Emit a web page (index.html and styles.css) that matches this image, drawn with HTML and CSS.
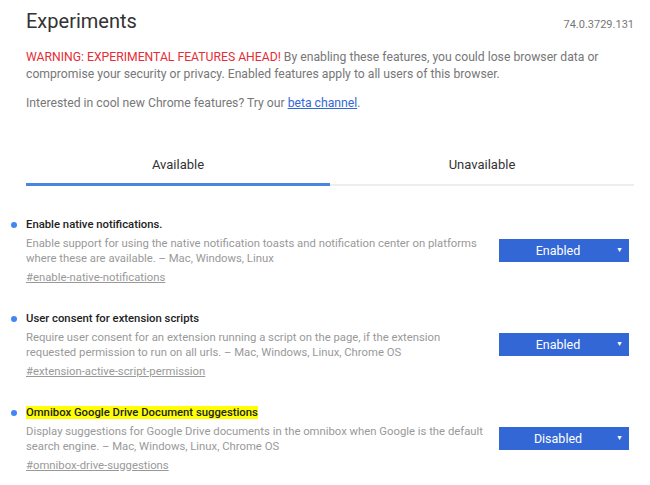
FILE: index.html
```html
<!DOCTYPE html>
<html lang="en">

<head>
    <meta charset="UTF-8">
    <title>Experiments</title>
    <link rel="stylesheet" href="styles.css">
</head>

<body>
    <div class="page">
        <div class="header">
            <h1 class="title">Experiments</h1>
            <span class="version">74.0.3729.131</span>
        </div>
        <p class="warning">
            <span class="warning-red">WARNING: EXPERIMENTAL FEATURES AHEAD!</span> By enabling these features, you could lose browser data or
            compromise your security or privacy. Enabled features apply to all users of this browser.
        </p>
        <p class="intro">Interested in cool new Chrome features? Try our <a href="#" class="beta">beta channel</a>.</p>

        <div class="tabs">
            <div class="tab active">Available</div>
            <div class="tab">Unavailable</div>
        </div>

        <div class="experiments">
            <div class="experiment">
                <div class="exp-text">
                    <div class="exp-name">Enable native notifications.</div>
                    <div class="exp-desc">Enable support for using the native notification toasts and notification center on platforms where these are available. – Mac, Windows, Linux</div>
                    <a href="#" class="exp-link">#enable-native-notifications</a>
                </div>
                <div class="select">Enabled<span class="arrow">▼</span></div>
            </div>

            <div class="experiment">
                <div class="exp-text">
                    <div class="exp-name">User consent for extension scripts</div>
                    <div class="exp-desc">Require user consent for an extension running a script on the page, if the extension requested permission to run on all urls. – Mac, Windows, Linux, Chrome OS</div>
                    <a href="#" class="exp-link">#extension-active-script-permission</a>
                </div>
                <div class="select">Enabled<span class="arrow">▼</span></div>
            </div>

            <div class="experiment">
                <div class="exp-text">
                    <div class="exp-name"><mark>Omnibox Google Drive Document suggestions</mark></div>
                    <div class="exp-desc">Display suggestions for Google Drive documents in the omnibox when Google is the default search engine. – Mac, Windows, Linux, Chrome OS</div>
                    <a href="#" class="exp-link">#omnibox-drive-suggestions</a>
                </div>
                <div class="select">Disabled<span class="arrow">▼</span></div>
            </div>
        </div>
    </div>
</body>

</html>
```

FILE: styles.css
```css
body {
    margin: 0;
    padding: 0;
    background: #fff;
    font-family: Roboto, "Liberation Sans", sans-serif;
    color: #333;
}

.page {
    padding: 7px 16px 0 26px;
}

.header {
    display: flex;
    justify-content: space-between;
    align-items: baseline;
}

.title {
    margin: 0;
    font-size: 20px;
    font-weight: 400;
    color: #333;
    line-height: 28px;
}

.version {
    font-size: 11px;
    color: #777;
}

.warning {
    margin: 14px 0 0;
    font-size: 12.2px;
    line-height: 17px;
    color: #777;
}

.warning-red {
    color: #e52d36;
}

.intro {
    margin: 12px 0 0;
    font-size: 12.2px;
    line-height: 17px;
    color: #777;
}

.beta {
    color: #3367d6;
}

.tabs {
    display: flex;
    margin-top: 39px;
    border-bottom: 2px solid #eeeeee;
}

.tab {
    flex: 1;
    text-align: center;
    font-size: 13px;
    color: #333;
    padding: 6px 0 11px;
    border-bottom: 3px solid transparent;
    margin-bottom: -2px;
}

.tab.active {
    border-bottom-color: #4a86e0;
}

.experiments {
    margin-top: 31px;
}

.experiment {
    display: flex;
    justify-content: space-between;
    align-items: flex-start;
    position: relative;
    height: 94px;
}

.experiment::before {
    content: '';
    position: absolute;
    left: -15px;
    top: 5px;
    width: 6px;
    height: 6px;
    border-radius: 50%;
    background: #4285f4;
}

.exp-text {
    width: 462px;
}

.exp-name {
    font-size: 11.3px;
    font-weight: 500;
    color: #222;
    line-height: 16px;
}

.exp-name mark {
    background: #ffff00;
    color: #222;
}

.exp-desc {
    font-size: 11.3px;
    line-height: 15px;
    color: #999;
    margin-top: 3px;
}

.exp-link {
    display: inline-block;
    margin-top: 1px;
    font-size: 11.3px;
    line-height: 15px;
    color: #999;
}

.select {
    position: relative;
    width: 118px;
    height: 23px;
    margin: 22px 5px 0 0;
    padding-right: 12px;
    background: #3367d6;
    color: #fff;
    font-size: 12.5px;
    line-height: 23px;
    text-align: center;
}

.arrow {
    position: absolute;
    right: 6px;
    top: 0;
    font-size: 7px;
}
```
